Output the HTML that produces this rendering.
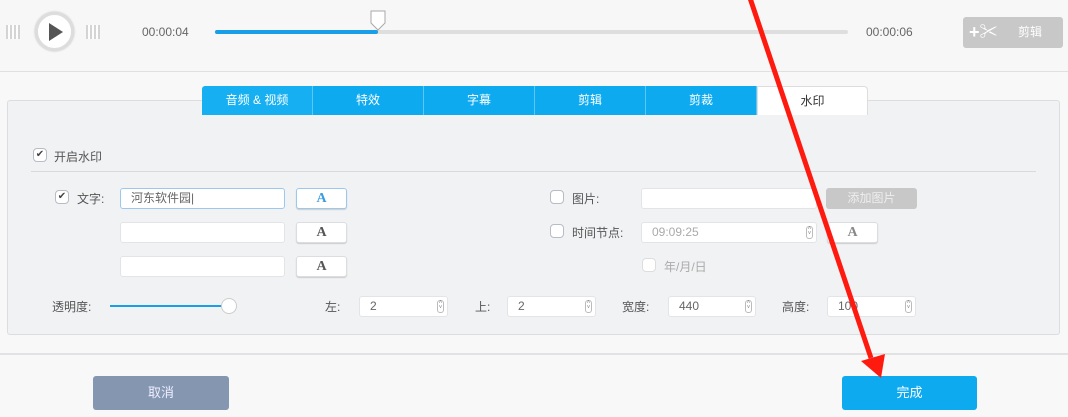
<!DOCTYPE html>
<html><head><meta charset="utf-8"><style>
*{box-sizing:border-box;margin:0;padding:0}
body{width:1068px;height:417px;background:#f8f8f9;position:relative;overflow:hidden;font-family:"Liberation Sans","Noto Sans CJK SC",sans-serif;font-size:12px;color:#555}
.a{position:absolute}
.inp{position:absolute;background:#fff;border:1px solid #e2e4e8;border-radius:3px;height:21px;font-size:12px;line-height:19px;padding-left:10px;color:#666}
.btnA{position:absolute;background:#fff;border:1px solid #dcdde0;border-radius:3px;height:21px;width:51px;text-align:center;font-family:"Liberation Serif",serif;font-weight:bold;font-size:14px;line-height:19px;color:#555;box-shadow:0 1px 1px #ccc}
.cb{position:absolute;width:14px;height:14px;border:1px solid #b8bcc4;border-radius:4px;background:#fff;font-size:10px;line-height:12px;text-align:center;color:#444}
.sp{position:absolute;right:3px;top:3px;width:7px;height:13px;border:1px solid #bbb;border-radius:3px;font-size:6px;line-height:5px;text-align:center;color:#888}
.tab{position:absolute;top:86px;height:29px;width:111px;background:#0eaaf0;color:#fff;text-align:center;line-height:29px;font-size:12px;border-right:1px solid #5cc6f5}
</style></head><body>
<div class="a" style="left:0;top:0;width:1068px;height:72px;background:#f7f7f8;border-bottom:1px solid #e0e0e0"></div>
<div class="a" style="left:6px;top:25px;width:14px;height:14px;background:repeating-linear-gradient(90deg,#ccc 0 2px,transparent 2px 4px),#fff;opacity:.8"></div>
<div class="a" style="left:86px;top:25px;width:14px;height:14px;background:repeating-linear-gradient(90deg,#ccc 0 2px,transparent 2px 4px),#fff;opacity:.8"></div>
<div class="a" style="left:35px;top:12px;width:39px;height:39px;border-radius:50%;background:#fff;border:3px solid #ddd;box-shadow:0 0 2px #bbb"></div>
<svg class="a" style="left:48px;top:22px" width="16" height="20"><path d="M1 1 L15 10 L1 19Z" fill="#555"/></svg>
<div class="a" style="left:142px;top:25px;color:#666;font-size:12px">00:00:04</div>
<div class="a" style="left:215px;top:30px;width:633px;height:4px;background:#dedede;border-radius:2px"></div>
<div class="a" style="left:215px;top:30px;width:163px;height:4px;background:#1a9ee8;border-radius:2px"></div>
<svg class="a" style="left:369px;top:10px" width="18" height="22"><path d="M2 1 H16 V13 L9 20 L2 13Z" fill="#fff" stroke="#aaa"/></svg>
<div class="a" style="left:866px;top:25px;color:#666;font-size:12px">00:00:06</div>
<div class="a" style="left:963px;top:17px;width:100px;height:31px;background:#c8c8c8;border-radius:3px;color:#fff;font-size:12px;line-height:31px"><span style="position:absolute;left:6px;font-size:18px;font-weight:bold">+✂</span><span style="position:absolute;left:55px">剪辑</span></div>

<div class="a" style="left:7px;top:100px;width:1053px;height:235px;background:#f1f2f4;border:1px solid #dcdde0;border-radius:3px"></div>
<div class="tab" style="left:202px;border-radius:3px 0 0 0;background:#16b0f2">音频 & 视频</div>
<div class="tab" style="left:313px">特效</div>
<div class="tab" style="left:424px">字幕</div>
<div class="tab" style="left:535px">剪辑</div>
<div class="tab" style="left:646px">剪裁</div>
<div class="tab" style="left:757px;background:#fff;color:#333;border:1px solid #ddd;border-bottom:none;border-radius:0 4px 0 0">水印</div>

<div class="cb" style="left:33px;top:148px">✔</div><div class="a" style="left:54px;top:148px;color:#555">开启水印</div>
<div class="a" style="left:31px;top:171px;width:1005px;height:1px;background:#d8d9dc"></div>

<div class="cb" style="left:55px;top:190px">✔</div><div class="a" style="left:77px;top:190px">文字:</div>
<div class="inp" style="left:120px;top:188px;width:165px;border-color:#9cc8f0">河东软件园|</div>
<div class="btnA" style="left:296px;top:188px;color:#3d9be0;border-color:#9cc8f0">A</div>
<div class="inp" style="left:120px;top:222px;width:165px"></div><div class="btnA" style="left:296px;top:222px">A</div>
<div class="inp" style="left:120px;top:256px;width:165px"></div><div class="btnA" style="left:296px;top:256px">A</div>

<div class="cb" style="left:550px;top:190px"></div><div class="a" style="left:572px;top:190px">图片:</div>
<div class="inp" style="left:641px;top:188px;width:176px"></div>
<div class="a" style="left:826px;top:188px;width:91px;height:21px;background:#c8c8c8;border-radius:3px;color:#eee;text-align:center;line-height:21px">添加图片</div>
<div class="cb" style="left:550px;top:224px"></div><div class="a" style="left:572px;top:224px">时间节点:</div>
<div class="inp" style="left:641px;top:222px;width:176px;color:#aaa">09:09:25<div class="sp">˄<br>˅</div></div>
<div class="btnA" style="left:827px;top:222px;color:#888">A</div>
<div class="cb" style="left:642px;top:258px;border-color:#ddd"></div><div class="a" style="left:664px;top:258px;color:#aaa">年/月/日</div>

<div class="a" style="left:52px;top:298px">透明度:</div>
<div class="a" style="left:110px;top:305px;width:118px;height:2px;background:#1a9ee8"></div>
<div class="a" style="left:221px;top:298px;width:16px;height:16px;border-radius:50%;background:#fff;border:1px solid #ccc"></div>
<div class="a" style="left:325px;top:298px">左:</div><div class="inp" style="left:359px;top:296px;width:89px">2<div class="sp">˄<br>˅</div></div>
<div class="a" style="left:475px;top:298px">上:</div><div class="inp" style="left:507px;top:296px;width:89px">2<div class="sp">˄<br>˅</div></div>
<div class="a" style="left:622px;top:298px">宽度:</div><div class="inp" style="left:668px;top:296px;width:88px">440<div class="sp">˄<br>˅</div></div>
<div class="a" style="left:782px;top:298px">高度:</div><div class="inp" style="left:827px;top:296px;width:89px">100<div class="sp">˄<br>˅</div></div>

<div class="a" style="left:0;top:353px;width:1068px;height:2px;background:#e2e2e4"></div>
<div class="a" style="left:93px;top:376px;width:136px;height:34px;background:#8596b1;border-radius:3px;color:#eef;text-align:center;line-height:34px;font-size:13px">取消</div>
<div class="a" style="left:842px;top:376px;width:135px;height:34px;background:#0eaaf0;border-radius:3px;color:#fff;text-align:center;line-height:34px;font-size:13px">完成</div>

<svg class="a" style="left:0;top:0" width="1068" height="417"><line x1="750" y1="-2" x2="871" y2="358" stroke="#ff1a10" stroke-width="5"/><path d="M861 361 L881 378 L885 354Z" fill="#ff1a10"/></svg>
</body></html>
